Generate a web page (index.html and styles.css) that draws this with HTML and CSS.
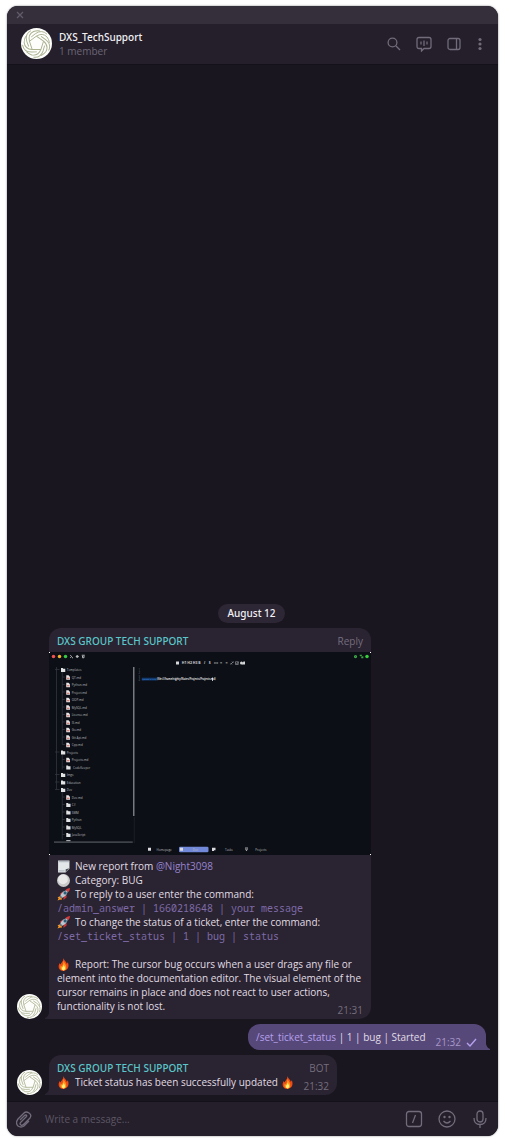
FILE: index.html
```html
<!DOCTYPE html>
<html lang="en">
<head>
<meta charset="utf-8">
<meta name="viewport" content="width=device-width, initial-scale=1">
<title>DXS_TechSupport</title>
<link rel="stylesheet" href="styles.css">
</head>
<body>
<svg class="defs" aria-hidden="true">
  <symbol id="logo" viewBox="-50 -50 100 100">
    <circle r="50" fill="#fdfdfb"/>
    <g fill="none" stroke="#a9b18f" stroke-width="3">
      <g id="blade"><path d="M-23 -7L0 -24Q20 -36 34 -21Q40 -13 42 -2M-17 -21L-3 -32Q17 -46 34 -30"/></g>
      <use href="#blade" transform="rotate(72)"/><use href="#blade" transform="rotate(144)"/><use href="#blade" transform="rotate(216)"/><use href="#blade" transform="rotate(288)"/>
    </g>
  </symbol>
  <symbol id="fire" viewBox="0 0 24 24">
    <path d="M12 0C13 5 18 7 18 11L20 8C23 15 21 23 12 24C3 23 1 16 5 9L6 12C8 9 12 6 12 0Z" fill="#ef4b16"/>
    <path d="M12 5C13 9 17 12 17 16C18 21 15 23 12 23C8 23 5 20 7 14L9 16C11 12 12 9 12 5Z" fill="#ff9a1c"/>
    <path d="M12 12C13 15 16 17 15 20Q14 23 12 23Q8 22 9 18C11 17 12 15 12 12Z" fill="#fff07a"/>
  </symbol>
  <symbol id="rocket" viewBox="0 0 24 24">
    <path d="M6 15L1 17L3 19L1 23L6 21L8 22L10 17Z" fill="#ff9a22"/>
    <path d="M5 11L10 7L13 10L8 14ZM12 17L17 12L18 17L12 22Z" fill="#c73336"/>
    <path d="M6 14Q11 4 20 4L20 5Q19 14 10 18Z" fill="#b9c6cf"/>
    <path d="M16 3Q20 0 24 0Q24 5 21 8Z" fill="#d83b3b"/>
    <circle cx="15" cy="9" r="3" fill="#2d5e7c"/><path d="M6 14L10 18L8 20L4 16Z" fill="#69747e"/>
  </symbol>
  <symbol id="note" viewBox="0 0 24 24">
    <path d="M2 1H23V16L16 23H2Z" fill="#e4e7ea"/><path d="M16 23V17L23 15Z" fill="#4b5259"/><path d="M3 3H22M3 20H14" stroke="#b4bcc3" stroke-width="2"/>
  </symbol>
  <symbol id="ball" viewBox="0 0 24 24"><circle cx="12" cy="12" r="12" fill="#c9c9c9"/><circle cx="11" cy="10" r="9" fill="#e9e9e9"/></symbol>
  <symbol id="tail" viewBox="0 0 4 6"><path d="M4 0V6H0V5Q3 4 4 0Z"/></symbol>
</svg>

<main class="window">
  <div class="titlebar">
    <button class="icon-btn close" aria-label="Close"><svg width="8" height="8" viewBox="0 0 8 8"><path d="M1 1L7 7M7 1L1 7"/></svg></button>
  </div>
  <header class="chat-header">
    <svg class="avatar-lg"><use href="#logo"/></svg>
    <div class="chat-title">
      <h1>DXS_TechSupport</h1>
      <p>1 member</p>
    </div>
    <div class="header-actions">
      <button class="icon-btn" aria-label="Search"><svg width="14" height="14" viewBox="0 0 14 14"><circle cx="5.5" cy="5.5" r="4.4"/><path d="M9 9L13 13"/></svg></button>
      <button class="icon-btn" aria-label="Voice chat"><svg width="16" height="16" viewBox="0 0 16 16"><path d="M3 1.500H13Q15 1.500 15 3.500V10.500Q15 12.500 13 12.500H8L5.500 15V12.500H3Q1 12.500 1 10.500V3.500Q1 1.500 3 1.500ZM5 5.500V8.500M8 4.500V10M11 5.500V8.500"/></svg></button>
      <button class="icon-btn" aria-label="Side panel"><svg width="14" height="14" viewBox="0 0 14 14"><rect x="1" y="1.500" width="12" height="11" rx="2"/><path d="M9.500 2V12"/></svg></button>
      <button class="icon-btn" aria-label="More"><svg class="solid" width="8" height="14" viewBox="0 0 8 14"><circle cx="4" cy="2.500" r="1.600"/><circle cx="4" cy="7" r="1.600"/><circle cx="4" cy="11.500" r="1.600"/></svg></button>
    </div>
  </header>

  <section class="messages">
    <time class="date">August 12</time>

    <article class="row">
      <svg class="avatar"><use href="#logo"/></svg>
      <div class="bubble report">
        <svg class="tail"><use href="#tail"/></svg>
        <div class="bubble-head"><span class="name">DXS GROUP TECH SUPPORT</span><button class="reply">Reply</button></div>
        <svg class="shot" viewBox="0 0 1288 812" role="img" aria-label="Documentation editor">
          <defs>
            <g id="folder"><path d="M0 -8H7L9 -5H17V8H0Z" fill="#e2e3e4"/></g>
            <g id="file"><path d="M0 -9H9L15 -3V9H0Z" fill="#e8e4e3"/><path d="M3 3H13" stroke="#d3625a" stroke-width="4"/></g>
          </defs>
          <path fill="#fff" d="M0 0H1288V812H0Z"/>
          <path fill="#0c0f16" d="M4 0H1284V4H1288V808H1284V812H4V808H0V4H4Z"/>
          <circle cx="18" cy="18" r="7" fill="#f2524d"/><circle cx="42" cy="18" r="7" fill="#f4b32d"/><circle cx="66" cy="18" r="7" fill="#35c943"/>
          <g fill="none" stroke="#b5b7ba" stroke-width="4"><path d="M85 13L91 18L85 23M92 23H96"/><circle cx="113" cy="18" r="4"/><path d="M108 18H118M131 13H143M134 16V23H140V16"/></g>
          <g fill="none" stroke="#38a843" stroke-width="5"><circle cx="1226" cy="18" r="4"/><path d="M1243 13H1249V18M1249 22H1255V17"/></g><circle cx="1272" cy="18" r="7" fill="#37d13d"/>
          <g fill="#d6d7d9"><path d="M508 38H520V50H508Z"/><circle cx="770" cy="44" r="6"/><path d="M778 38H784V50H772Z"/></g>
          <g class="tools"><text x="531" y="49">H1</text><text x="553" y="49">H2</text><text x="575" y="49">H3</text><text x="597" y="49">B</text><text x="620" y="49" font-style="italic">I</text><text x="639" y="49">S</text><text x="659" y="49">««</text><text x="684" y="49">≡</text><text x="706" y="49">≡</text></g>
          <path d="M726 50L738 38M726 44L732 50M732 38L738 44M746 39H757V50H746ZM749 44L752 47L758 39" fill="none" stroke="#bfc0c2" stroke-width="2"/>
          <path d="M30 60V550M53 80V370M53 410V470M53 560V750M24 70H42M24 400H42M24 490H42M24 520H42M24 550H42M53 100H63M53 130H63M53 160H63M53 190H63M53 220H63M53 250H63M53 280H63M53 310H63M53 340H63M53 370H63M53 430H63M53 460H63M53 580H63M53 610H63M53 640H63M53 670H63M53 700H63M53 730H63" fill="none" stroke="#343840" stroke-width="3"/>
          <use href="#folder" x="48" y="72"/><use href="#file" x="69" y="102"/><use href="#file" x="69" y="132"/><use href="#file" x="69" y="162"/><use href="#file" x="69" y="192"/><use href="#file" x="69" y="222"/><use href="#file" x="69" y="252"/><use href="#file" x="69" y="282"/><use href="#file" x="69" y="312"/><use href="#file" x="69" y="342"/><use href="#file" x="69" y="372"/>
          <use href="#folder" x="48" y="402"/><use href="#file" x="69" y="432"/><use href="#folder" x="69" y="462"/><use href="#folder" x="48" y="492"/><use href="#folder" x="48" y="522"/><use href="#folder" x="48" y="552"/><use href="#file" x="69" y="582"/><use href="#folder" x="69" y="612"/><use href="#folder" x="69" y="642"/><use href="#folder" x="69" y="672"/><use href="#folder" x="69" y="702"/><use href="#folder" x="69" y="732"/><path d="M69 752H86V758H69Z" fill="#a8aaad"/>
          <g class="tree"><text x="71" y="76">Templates</text><text x="91" y="106">QT.md</text><text x="91" y="136">Python.md</text><text x="91" y="166">Project.md</text><text x="91" y="196">OOP.md</text><text x="91" y="226">MySQL.md</text><text x="91" y="256">License.md</text><text x="91" y="286">IS.md</text><text x="91" y="316">Go.md</text><text x="91" y="346">Git Api.md</text><text x="91" y="376">Cpp.md</text><text x="71" y="406">Projects</text><text x="91" y="436">Projects.md</text><text x="96" y="466">CodeKeeper</text><text x="71" y="496">Imgs</text><text x="71" y="526">Education</text><text x="71" y="556">Dev</text><text x="91" y="586">Dev.md</text><text x="91" y="616">C#</text><text x="91" y="646">SMM</text><text x="91" y="676">Python</text><text x="91" y="706">MySQL</text><text x="91" y="736">JavaScript</text></g>
          <path d="M341 660V764" stroke="#20252c" stroke-width="3"/><path d="M336 60H342V656H336Z" fill="#777a80"/><path d="M20 757H335V764H20Z" fill="#3e4249"/>
          <g class="lines"><text x="358" y="74">1</text><text x="358" y="88">2</text><text x="358" y="102">3</text><text x="358" y="116">4</text></g>
          <path d="M371 103H431V114H371Z" fill="#133b70"/><text class="code-link" x="372" y="113">![Drop a file]</text><text class="code" x="432" y="113">(file:///home/nighty/Notes/Projects/Projects.md)</text><path d="M654 102V116" stroke="#fff" stroke-width="3"/>
          <rect x="520" y="779" width="118" height="22" rx="5" fill="#7289da"/>
          <path d="M396 783H408V795H396ZM524 783H536V795H524ZM652 783H666V793H660V796H652Z" fill="#d9dadd"/><path d="M784 784H796M786 787L790 795L794 787" stroke="#d9dadd" stroke-width="3" fill="none"/>
          <g class="tree"><text x="430" y="794">Homepage</text><text x="575" y="794">Doc</text><text x="704" y="794">Tasks</text><text x="825" y="794">Projects</text></g>
        </svg>
        <div class="copy">
          <p><svg class="emoji"><use href="#note"/></svg>New report from <a href="#night3098">@Night3098</a></p>
          <p><svg class="emoji"><use href="#ball"/></svg>Category: BUG</p>
          <p><svg class="emoji"><use href="#rocket"/></svg>To reply to a user enter the command:</p>
          <p><code>/admin_answer | 1660218648 | your message</code></p>
          <p><svg class="emoji"><use href="#rocket"/></svg>To change the status of a ticket, enter the command:</p>
          <p><code>/set_ticket_status | 1 | bug | status</code></p>
          <p class="gap"><svg class="emoji"><use href="#fire"/></svg>Report: The cursor bug occurs when a user drags any file or element into the documentation editor. The visual element of the cursor remains in place and does not react to user actions, <span>functionality is not lost.</span><time class="stamp">21:31</time></p>
        </div>
      </div>
    </article>

    <article class="row own">
      <div class="bubble sent">
        <p><a href="#set_ticket_status">/set_ticket_status</a> | 1 | bug | Started</p>
        <span class="sent-meta"><time>21:32</time><svg width="11" height="9" viewBox="0 0 11 9"><path d="M1 5L4 8L10 1"/></svg></span>
        <svg class="tail"><use href="#tail"/></svg>
      </div>
    </article>

    <article class="row">
      <svg class="avatar"><use href="#logo"/></svg>
      <div class="bubble status">
        <svg class="tail"><use href="#tail"/></svg>
        <div class="status-line"><span class="name">DXS GROUP TECH SUPPORT</span><span class="muted">BOT</span></div>
        <div class="status-line"><p><svg class="emoji"><use href="#fire"/></svg>Ticket status has been successfully updated <svg class="emoji end"><use href="#fire"/></svg></p><time class="muted low">21:32</time></div>
      </div>
    </article>
  </section>

  <form class="composer">
    <button type="button" class="icon-btn" aria-label="Attach"><svg width="16" height="17" viewBox="0 0 16 17"><path d="M11 5L5 11Q3 13 5 14Q6 15 8 13L14 7Q16 4 13 2Q10 0 8 2L2 8Q-1 12 2 15Q5 17 8 15L13 10M11 5Q10 3 8 5L4 9"/></svg></button>
    <input type="text" aria-label="Message" placeholder="Write a message...">
    <div class="composer-actions">
      <button type="button" class="icon-btn" aria-label="Commands"><svg width="18" height="18" viewBox="0 0 18 18"><rect x="1.500" y="1.500" width="15" height="15" rx="2.500"/><path d="M7.500 13L10.500 5"/></svg></button>
      <button type="button" class="icon-btn" aria-label="Emoji"><svg width="18" height="18" viewBox="0 0 18 18"><circle cx="9" cy="9" r="8"/><path d="M5.500 11Q9 15 12.500 11"/><circle class="dot" cx="6.500" cy="7" r="1.200"/><circle class="dot" cx="11.500" cy="7" r="1.200"/></svg></button>
      <button type="button" class="icon-btn" aria-label="Record voice"><svg width="18" height="18" viewBox="-2 0 18 18"><rect x="4" y="1" width="6" height="11" rx="3"/><path d="M1 8Q1 14.500 7 14.500Q13 14.500 13 8M7 15V18"/></svg></button>
    </div>
  </form>
</main>
</body>
</html>
```
FILE: styles.css
```css
* { box-sizing: border-box; }
body {
  margin: 0;
  min-height: 100vh;
  padding: 6px 7px 7px;
  display: flex;
  background: #fff;
  color: #e0dde4;
  font: 10px/14px "Open Sans", "Noto Sans", sans-serif;
}
h1, p { margin: 0; font-size: inherit; }
a { color: #9683cf; text-decoration: none; }
button, input { font: inherit; color: inherit; background: none; border: 0; padding: 0; }
.defs { position: absolute; width: 0; height: 0; }
.window {
  flex: 1;
  min-width: 0;
  display: flex;
  flex-direction: column;
  overflow: hidden;
  border-radius: 11px;
  background: #1a161f;
  box-shadow: 0 0 2px #777;
}
.titlebar { height: 18px; padding-left: 9px; display: flex; align-items: center; background: #352e3b; }
.icon-btn { display: flex; }
.icon-btn svg { fill: none; stroke: #716b7b; stroke-width: 1.3; }
.icon-btn svg.solid { fill: #716b7b; stroke: none; }
.icon-btn .dot { fill: #716b7b; stroke: none; }
.close svg { stroke: #625b69; }
.chat-header {
  height: 41px;
  padding: 0 14px 1px;
  display: flex;
  align-items: center;
  gap: 7px;
  background: #241f2a;
  border-bottom: 1px solid #15111a;
}
.avatar-lg { width: 31px; height: 31px; }
.chat-title { flex: 1; }
.chat-title h1, .name, .date { font-family: "Noto Sans", sans-serif; font-weight: 500; }
.chat-title h1 { color: #f3f1f5; }
.chat-title p { color: #6d6677; }
.header-actions { display: flex; align-items: center; gap: 15px; }
.messages { flex: 1; display: flex; flex-direction: column; justify-content: flex-end; gap: 5px; padding: 0 12px 6px 10px; }
.date { align-self: center; padding: 2px 9px 3px; border-radius: 10px; background: #2d2635; color: #f3f1f5; }
.row { display: flex; align-items: flex-end; gap: 7px; }
.avatar { width: 25px; height: 25px; flex: none; }
.own { justify-content: flex-end; }
.bubble { position: relative; background: #2a2331; border-radius: 12px 12px 12px 0; }
.tail { position: absolute; left: -4px; bottom: 0; width: 4px; height: 6px; fill: #2a2331; }
.report { width: 322px; padding-bottom: 6px; }
.bubble-head { height: 24px; padding: 2px 8px 0; display: flex; justify-content: space-between; align-items: center; }
.name { color: #5bc7ca; }
.reply, .muted, .stamp { color: #756e7d; }
.shot { display: block; width: 100%; }
.tree { fill: #b9bbbe; font: 12px "Open Sans", sans-serif; }
.tools { fill: #d0d1d3; font: bold 14px "Open Sans", sans-serif; }
.lines { fill: #686d75; font: 11px "Open Sans", sans-serif; }
.code-link { fill: #3988dc; font: 10px "Open Sans", sans-serif; }
.code { fill: #fff; font: 600 10px "Open Sans", sans-serif; }
.copy { padding: 4px 8px 0; }
.emoji { width: 13px; height: 13px; margin-right: 5px; vertical-align: -3px; }
.emoji.end { margin: 0; }
code { color: #7e6ba8; font: 10px/14px "Noto Sans Mono", "DejaVu Sans Mono", monospace; }
.gap { margin-top: 14px; }
.stamp { float: right; margin: 4px 0 -4px; }
.sent { display: flex; gap: 10px; height: 26px; padding: 6px 9px 0 8px; border-radius: 12px 12px 0 12px; background: #57487a; }
.sent a { color: #b5a0ed; }
.sent .tail { left: auto; right: -4px; fill: #57487a; transform: scaleX(-1); }
.sent-meta { display: flex; align-items: center; gap: 5px; padding-top: 4px; color: #a697c8; }
.sent-meta svg { fill: none; stroke: #b5a0ed; stroke-width: 1.4; }
.status { padding: 6px 8px; }
.status-line { display: flex; justify-content: space-between; gap: 10px; height: 14px; }
.low { padding-top: 4px; }
.composer { height: 35px; padding: 0 9px; display: flex; align-items: center; gap: 13px; background: #241f2a; border-top: 1px solid #15111a; }
.composer input { flex: 1; min-width: 0; outline: 0; }
.composer input::placeholder { color: #5d5666; opacity: 1; }
.composer-actions { display: flex; gap: 15px; }
```
